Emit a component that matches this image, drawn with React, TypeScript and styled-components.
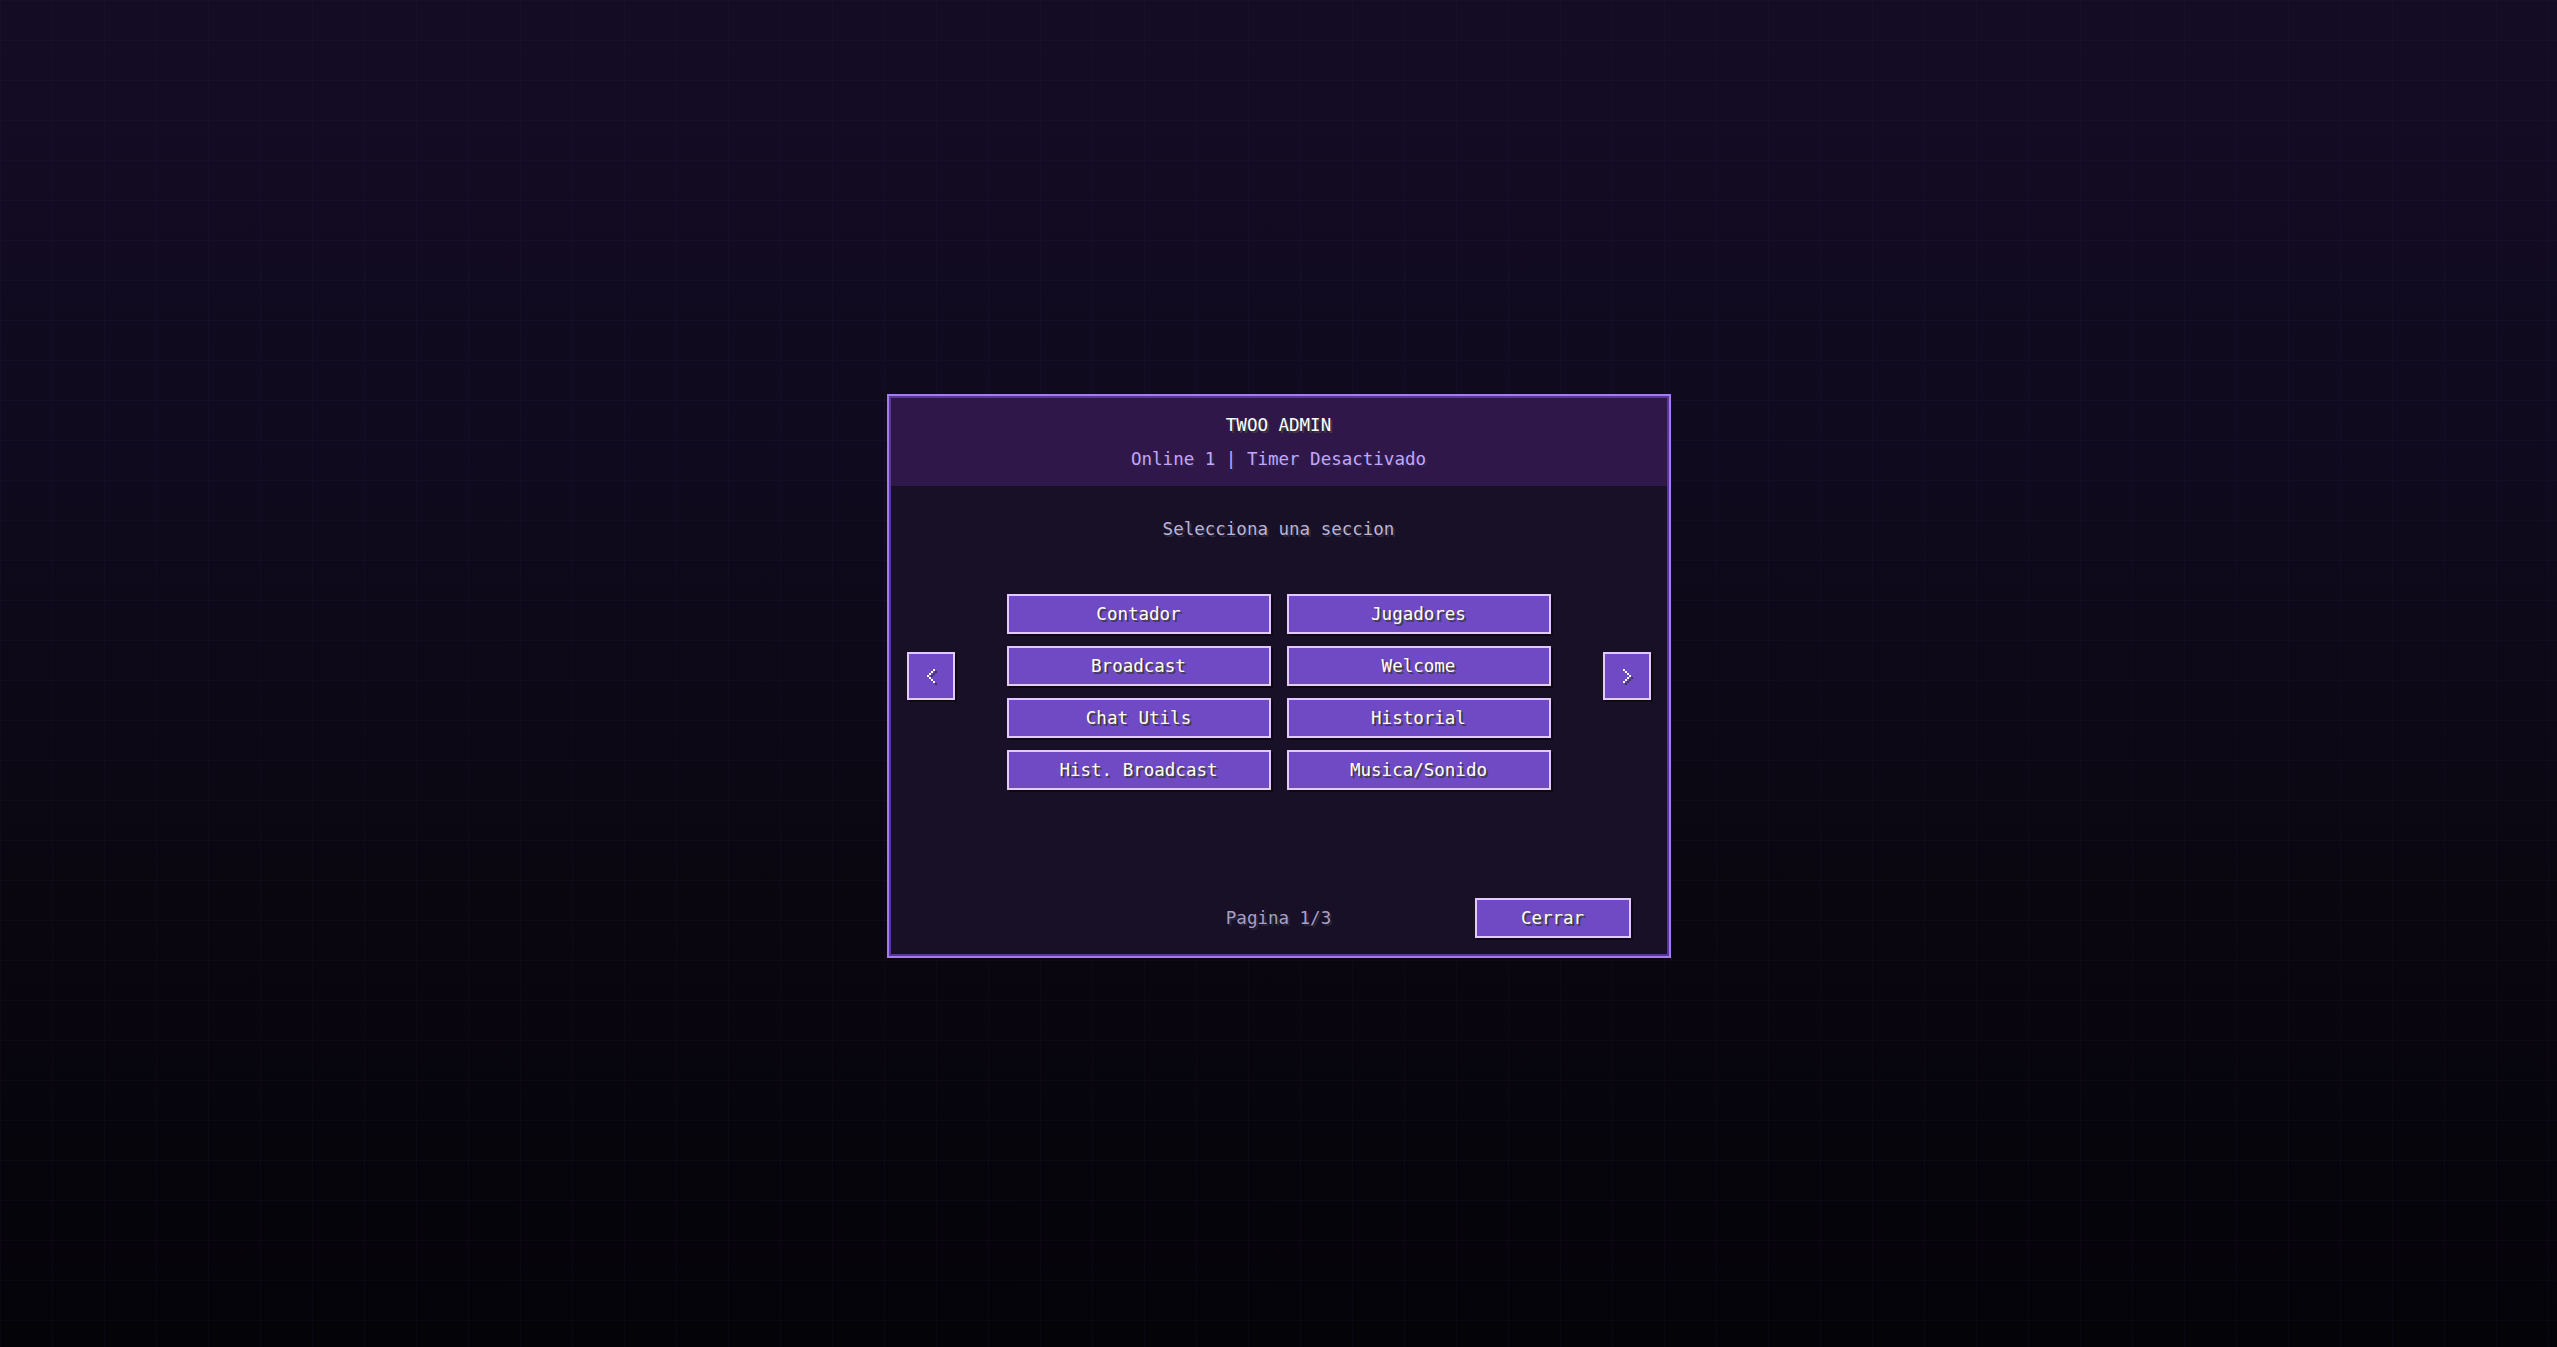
import styled, { createGlobalStyle } from 'styled-components';

// ─── Data ─────────────────────────────────────────────────────────────────────
const sections = [
  'Contador',
  'Jugadores',
  'Broadcast',
  'Welcome',
  'Chat Utils',
  'Historial',
  'Hist. Broadcast',
  'Musica/Sonido',
];

const page = { current: 1, total: 3 };
const online = 1;

// ─── Styles ───────────────────────────────────────────────────────────────────
const GlobalStyle = createGlobalStyle`
  html, body {
    margin: 0;
    padding: 0;
  }
  body {
    font-family: "DejaVu Sans Mono", "Liberation Mono", monospace;
    background: #0b0815;
  }
`;

const Screen = styled.main`
  min-height: 100vh;
  display: flex;
  align-items: center;
  justify-content: center;
  padding-top: 5px;
  box-sizing: border-box;
  background-color: #0b0815;
  background-image:
    linear-gradient(rgba(120, 90, 210, 0.045) 1px, transparent 1px),
    linear-gradient(90deg, rgba(120, 90, 210, 0.045) 1px, transparent 1px),
    linear-gradient(180deg, #140c25 0%, #0f0a1d 35%, #09060f 70%, #040308 100%);
  background-size: 52px 40px, 52px 40px, 100% 100%;
`;

const Frame = styled.section`
  width: 784px;
  height: 564px;
  box-sizing: border-box;
  border: 2px solid #a67bf1;
  display: flex;
`;

const Inner = styled.div`
  flex: 1;
  display: flex;
  flex-direction: column;
  border: 2px solid #57379a;
  background: #171027;
`;

const Header = styled.header`
  background: #2f1849;
  padding: 17px 0;
  display: flex;
  flex-direction: column;
  align-items: center;
  gap: 14px;
`;

const Text = styled.div<{ $tone?: 'title' | 'accent' | 'muted' | 'dim' }>`
  font-size: 17.5px;
  line-height: 20px;
  white-space: pre;
  color: ${({ $tone }) =>
    $tone === 'accent' ? '#c4a5ff' : $tone === 'muted' ? '#bdb4d6' : $tone === 'dim' ? '#aa9fc6' : '#ffffff'};
  text-shadow: 2px 2px 0
    ${({ $tone }) =>
      $tone === 'accent' ? '#312450' : $tone === 'muted' ? '#2f2a3d' : $tone === 'dim' ? '#2a2538' : '#3d3d3d'};
`;

const Body = styled.div`
  flex: 1;
  display: flex;
  flex-direction: column;
  align-items: stretch;
  padding: 33px 16px 16px;
`;

const Prompt = styled(Text)`
  text-align: center;
`;

const NavRow = styled.div`
  margin-top: 55px;
  display: flex;
  align-items: flex-start;
  justify-content: space-between;
`;

const SectionGrid = styled.div`
  display: grid;
  grid-template-columns: repeat(2, 264px);
  grid-auto-rows: 40px;
  column-gap: 16px;
  row-gap: 12px;
`;

const McButton = styled.button<{ $width?: number }>`
  width: ${({ $width }) => ($width ? `${$width}px` : '100%')};
  height: 40px;
  margin: 0;
  padding: 0;
  box-sizing: border-box;
  border: 2px solid #e4c9fd;
  background: #7049c4;
  box-shadow: 2px 2px 0 #0c0814;
  color: #ffffff;
  font-family: inherit;
  font-size: 17.5px;
  line-height: 20px;
  text-shadow: 2px 2px 0 #3e3e3e;
  white-space: pre;
  cursor: pointer;
  display: flex;
  align-items: center;
  justify-content: center;
`;

const ArrowButton = styled(McButton)`
  width: 48px;
  height: 48px;
  margin-top: 58px;
`;

const Footer = styled.footer`
  margin-top: auto;
  display: grid;
  grid-template-columns: 1fr auto 1fr;
  align-items: center;
`;

const FooterEnd = styled.div`
  grid-column: 3;
  display: flex;
  justify-content: flex-end;
  padding-right: 20px;
`;

const PageLabel = styled(Text)`
  grid-column: 2;
`;

// ─── Pixel chevron (4×7 cells, 2px each, with drop shadow) ──────────────────
const leftCells: [number, number][] = [
  [3, 0],
  [2, 1],
  [1, 2],
  [0, 3],
  [1, 4],
  [2, 5],
  [3, 6],
];

function Chevron({ dir }: { dir: 'left' | 'right' }) {
  const cells = dir === 'left' ? leftCells : leftCells.map(([x, y]) => [3 - x, y] as [number, number]);
  return (
    <svg width="8" height="14" viewBox="0 0 8 14" overflow="visible" shapeRendering="crispEdges" aria-hidden="true">
      {cells.map(([x, y]) => (
        <rect key={`s${x}-${y}`} x={x * 2 + 2} y={y * 2 + 2} width="2" height="2" fill="#3e3650" />
      ))}
      {cells.map(([x, y]) => (
        <rect key={`f${x}-${y}`} x={x * 2} y={y * 2} width="2" height="2" fill="#ffffff" />
      ))}
    </svg>
  );
}

// ─── Component ────────────────────────────────────────────────────────────────
export default function App() {
  return (
    <>
      <GlobalStyle />
      <Screen>
        <Frame>
          <Inner>
            <Header>
              <Text $tone="title">TWOO ADMIN</Text>
              <Text $tone="accent">{`Online ${online} | Timer Desactivado`}</Text>
            </Header>
            <Body>
              <Prompt $tone="muted">Selecciona una seccion</Prompt>
              <NavRow>
                <ArrowButton aria-label="Anterior">
                  <Chevron dir="left" />
                </ArrowButton>
                <SectionGrid>
                  {sections.map((name) => (
                    <McButton key={name}>{name}</McButton>
                  ))}
                </SectionGrid>
                <ArrowButton aria-label="Siguiente">
                  <Chevron dir="right" />
                </ArrowButton>
              </NavRow>
              <Footer>
                <PageLabel $tone="dim">{`Pagina ${page.current}/${page.total}`}</PageLabel>
                <FooterEnd>
                  <McButton $width={156}>Cerrar</McButton>
                </FooterEnd>
              </Footer>
            </Body>
          </Inner>
        </Frame>
      </Screen>
    </>
  );
}
